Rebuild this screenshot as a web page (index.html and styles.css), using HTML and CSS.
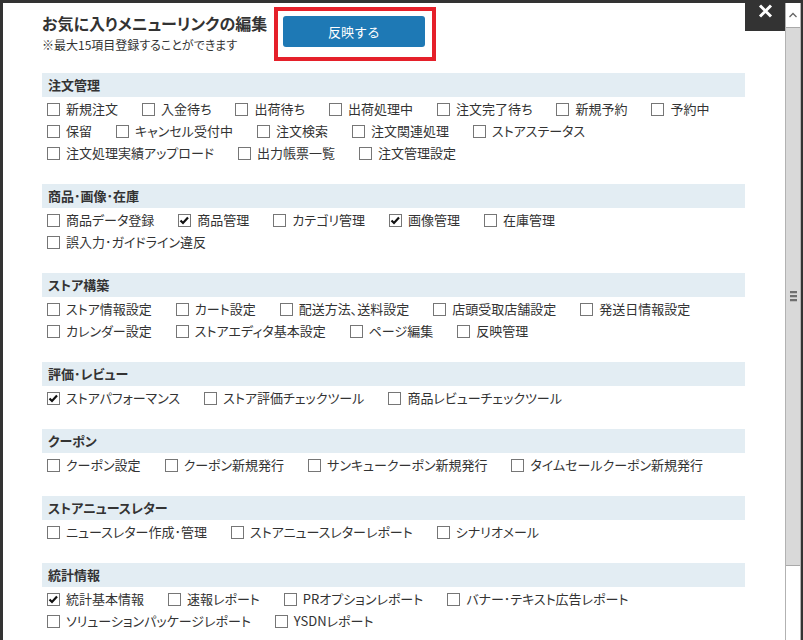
FILE: index.html
```html
<!DOCTYPE html>
<html lang="ja">
<head>
<meta charset="utf-8">
<title>お気に入りメニューリンクの編集</title>
<link rel="stylesheet" href="styles.css">
</head>
<body>
<div class="frame">
  <div class="modal">
    <div class="content">
      <header class="head">
        <div class="titles">
          <h1>お気に入りメニューリンクの編集</h1>
          <p>※最大15項目登録することができます</p>
        </div>
        <button class="apply" type="button">反映する</button>
      </header>

      <section class="group">
        <h2>注文管理</h2>
        <div class="rows">
          <div class="row">
            <label class="item"><span class="cb"></span><span>新規注文</span></label>
            <label class="item"><span class="cb"></span><span>入金待ち</span></label>
            <label class="item"><span class="cb"></span><span>出荷待ち</span></label>
            <label class="item"><span class="cb"></span><span>出荷処理中</span></label>
            <label class="item"><span class="cb"></span><span>注文完了待ち</span></label>
            <label class="item"><span class="cb"></span><span>新規予約</span></label>
            <label class="item"><span class="cb"></span><span>予約中</span></label>
          </div>
          <div class="row">
            <label class="item"><span class="cb"></span><span>保留</span></label>
            <label class="item"><span class="cb"></span><span>キャンセル受付中</span></label>
            <label class="item"><span class="cb"></span><span>注文検索</span></label>
            <label class="item"><span class="cb"></span><span>注文関連処理</span></label>
            <label class="item"><span class="cb"></span><span>ストアステータス</span></label>
          </div>
          <div class="row">
            <label class="item"><span class="cb"></span><span>注文処理実績アップロード</span></label>
            <label class="item"><span class="cb"></span><span>出力帳票一覧</span></label>
            <label class="item"><span class="cb"></span><span>注文管理設定</span></label>
          </div>
        </div>
      </section>

      <section class="group">
        <h2>商品･画像･在庫</h2>
        <div class="rows">
          <div class="row">
            <label class="item"><span class="cb"></span><span>商品データ登録</span></label>
            <label class="item"><span class="cb checked"><svg viewBox="0 0 13 13"><path d="M2.5 6.5 L5 9 L10 3.5"/></svg></span><span>商品管理</span></label>
            <label class="item"><span class="cb"></span><span>カテゴリ管理</span></label>
            <label class="item"><span class="cb checked"><svg viewBox="0 0 13 13"><path d="M2.5 6.5 L5 9 L10 3.5"/></svg></span><span>画像管理</span></label>
            <label class="item"><span class="cb"></span><span>在庫管理</span></label>
          </div>
          <div class="row">
            <label class="item"><span class="cb"></span><span>誤入力･ガイドライン違反</span></label>
          </div>
        </div>
      </section>

      <section class="group">
        <h2>ストア構築</h2>
        <div class="rows">
          <div class="row">
            <label class="item"><span class="cb"></span><span>ストア情報設定</span></label>
            <label class="item"><span class="cb"></span><span>カート設定</span></label>
            <label class="item"><span class="cb"></span><span>配送方法、送料設定</span></label>
            <label class="item"><span class="cb"></span><span>店頭受取店舗設定</span></label>
            <label class="item"><span class="cb"></span><span>発送日情報設定</span></label>
          </div>
          <div class="row">
            <label class="item"><span class="cb"></span><span>カレンダー設定</span></label>
            <label class="item"><span class="cb"></span><span>ストアエディタ基本設定</span></label>
            <label class="item"><span class="cb"></span><span>ページ編集</span></label>
            <label class="item"><span class="cb"></span><span>反映管理</span></label>
          </div>
        </div>
      </section>

      <section class="group">
        <h2>評価･レビュー</h2>
        <div class="rows">
          <div class="row">
            <label class="item"><span class="cb checked"><svg viewBox="0 0 13 13"><path d="M2.5 6.5 L5 9 L10 3.5"/></svg></span><span>ストアパフォーマンス</span></label>
            <label class="item"><span class="cb"></span><span>ストア評価チェックツール</span></label>
            <label class="item"><span class="cb"></span><span>商品レビューチェックツール</span></label>
          </div>
        </div>
      </section>

      <section class="group">
        <h2>クーポン</h2>
        <div class="rows">
          <div class="row">
            <label class="item"><span class="cb"></span><span>クーポン設定</span></label>
            <label class="item"><span class="cb"></span><span>クーポン新規発行</span></label>
            <label class="item"><span class="cb"></span><span>サンキュークーポン新規発行</span></label>
            <label class="item"><span class="cb"></span><span>タイムセールクーポン新規発行</span></label>
          </div>
        </div>
      </section>

      <section class="group">
        <h2>ストアニュースレター</h2>
        <div class="rows">
          <div class="row">
            <label class="item"><span class="cb"></span><span>ニュースレター作成･管理</span></label>
            <label class="item"><span class="cb"></span><span>ストアニュースレターレポート</span></label>
            <label class="item"><span class="cb"></span><span>シナリオメール</span></label>
          </div>
        </div>
      </section>

      <section class="group">
        <h2>統計情報</h2>
        <div class="rows">
          <div class="row">
            <label class="item"><span class="cb checked"><svg viewBox="0 0 13 13"><path d="M2.5 6.5 L5 9 L10 3.5"/></svg></span><span>統計基本情報</span></label>
            <label class="item"><span class="cb"></span><span>速報レポート</span></label>
            <label class="item"><span class="cb"></span><span>PRオプションレポート</span></label>
            <label class="item"><span class="cb"></span><span>バナー･テキスト広告レポート</span></label>
          </div>
          <div class="row">
            <label class="item"><span class="cb"></span><span>ソリューションパッケージレポート</span></label>
            <label class="item"><span class="cb"></span><span>YSDNレポート</span></label>
          </div>
        </div>
      </section>
    </div>

    <div class="scrollbar">
      <div class="sb-up"><svg viewBox="0 0 14 10" width="14" height="10"><polyline points="3.5,7 7,3.5 10.5,7"/></svg></div>
      <div class="sb-thumb"><span class="grip"><i></i><i></i><i></i></span></div>
      <div class="sb-track"></div>
    </div>
  </div>

  <div class="close"><svg viewBox="0 0 15 14" width="15" height="14"><path d="M2 1.5 L13 12.5 M13 1.5 L2 12.5"/></svg></div>
  <div class="highlight"></div>
</div>
</body>
</html>
```
FILE: styles.css
```css
html, body {
  margin: 0;
  padding: 0;
}
body {
  background: #333;
  height: 640px;
  overflow: hidden;
  font-family: "Noto Sans CJK JP", "Liberation Sans", sans-serif;
  color: #333;
  font-feature-settings: "palt";
}
.frame {
  position: relative;
  padding: 3px 2px 0 3px;
  height: 637px;
}
.modal {
  display: flex;
  height: 637px;
  background: #fff;
  overflow: hidden;
}
.content {
  width: 782px;
  flex: none;
  box-sizing: border-box;
  padding: 0 40px 0 39px;
}
.head {
  display: flex;
  align-items: flex-start;
  height: 70px;
}
.titles {
  width: 241px;
  flex: none;
}
.titles h1 {
  margin: 0;
  padding-top: 10px;
  font-size: 16px;
  line-height: 21px;
  font-weight: bold;
  color: #333;
  white-space: nowrap;
}
.titles p {
  margin: 3px 0 0;
  font-size: 12px;
  line-height: 16px;
  color: #333;
  white-space: nowrap;
}
.apply {
  margin: 13px 0 0 0;
  width: 142px;
  height: 31px;
  border: none;
  border-radius: 3px;
  background: #1e79b5;
  color: #fff;
  font-family: inherit;
  font-size: 13px;
  padding: 0;
}
.group h2 {
  margin: 0;
  height: 24px;
  line-height: 24px;
  padding-left: 6px;
  background: #e3edf3;
  font-size: 13px;
  font-weight: bold;
  color: #333;
}
.rows {
  padding: 1px 0 20px;
}
.row {
  display: flex;
  align-items: center;
  gap: 24px;
  height: 22px;
  padding-left: 5px;
}
.item {
  display: flex;
  align-items: center;
  gap: 6px;
  font-size: 13px;
  line-height: 22px;
  color: #333;
  white-space: nowrap;
}
.cb {
  width: 13px;
  height: 13px;
  box-sizing: border-box;
  border: 1px solid #767676;
  background: #fff;
  flex: none;
  position: relative;
}
.cb svg {
  position: absolute;
  left: -1px;
  top: -1px;
  width: 13px;
  height: 13px;
}
.cb svg path {
  fill: none;
  stroke: #111;
  stroke-width: 2.2;
}
.scrollbar {
  width: 16px;
  flex: none;
  box-sizing: border-box;
  border-left: 1px solid #b2b2b2;
  border-right: 1px solid #b2b2b2;
  display: flex;
  flex-direction: column;
  background: #fff;
}
.sb-up {
  height: 25px;
  box-sizing: border-box;
  border-bottom: 1px solid #a9a9a9;
  display: flex;
  align-items: center;
  justify-content: center;
  background: #fff;
}
.sb-up svg polyline {
  fill: none;
  stroke: #666;
  stroke-width: 1.3;
}
.sb-thumb {
  height: 538px;
  box-sizing: border-box;
  background: #d9d9d9;
  border-bottom: 1px solid #a9a9a9;
  display: flex;
  align-items: center;
  justify-content: center;
}
.grip {
  display: flex;
  flex-direction: column;
  gap: 1px;
}
.grip i {
  display: block;
  width: 7px;
  height: 2px;
  background: #6f6f6f;
  border-bottom: 1px solid #bdbdbd;
}
.sb-track {
  flex: 1;
  background: #fff;
}
.close {
  position: absolute;
  left: 745px;
  top: 0;
  width: 40px;
  height: 31px;
  background: #333;
  display: flex;
  justify-content: center;
  padding-top: 4px;
  box-sizing: border-box;
}
.close svg path {
  stroke: #fff;
  stroke-width: 3;
  fill: none;
}
.highlight {
  position: absolute;
  left: 274px;
  top: 7px;
  width: 162px;
  height: 54px;
  box-sizing: border-box;
  border: 4px solid #e5202a;
}
```
